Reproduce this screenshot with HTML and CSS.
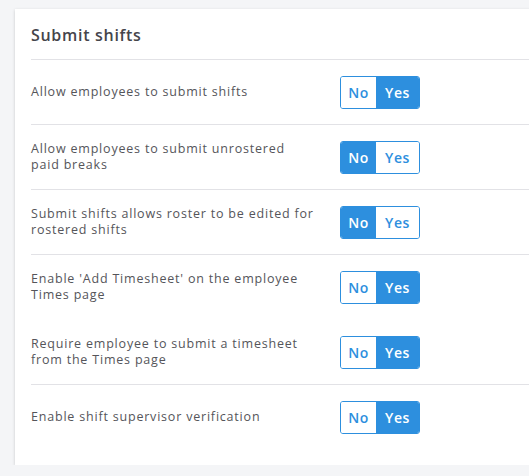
FILE: index.html
```html
<!DOCTYPE html>
<html>
<head>
<meta charset="utf-8">
<link rel="stylesheet" href="styles.css">
</head>
<body>
<div class="card">
  <div class="card-header"><h2 class="title">Submit shifts</h2></div>
  <div class="row">
    <div class="label">Allow employees to submit shifts</div>
    <div class="toggle"><span class="seg seg-no">No</span><span class="seg seg-yes on">Yes</span></div>
  </div>
  <div class="row">
    <div class="label">Allow employees to submit unrostered paid breaks</div>
    <div class="toggle"><span class="seg seg-no on">No</span><span class="seg seg-yes">Yes</span></div>
  </div>
  <div class="row">
    <div class="label">Submit shifts allows roster to be edited for rostered shifts</div>
    <div class="toggle"><span class="seg seg-no on">No</span><span class="seg seg-yes">Yes</span></div>
  </div>
  <div class="row no-border">
    <div class="label">Enable 'Add Timesheet' on the employee Times page</div>
    <div class="toggle"><span class="seg seg-no">No</span><span class="seg seg-yes on">Yes</span></div>
  </div>
  <div class="row">
    <div class="label">Require employee to submit a timesheet from the Times page</div>
    <div class="toggle"><span class="seg seg-no">No</span><span class="seg seg-yes on">Yes</span></div>
  </div>
  <div class="row no-border">
    <div class="label">Enable shift supervisor verification</div>
    <div class="toggle"><span class="seg seg-no">No</span><span class="seg seg-yes on">Yes</span></div>
  </div>
</div>
</body>
</html>
```
FILE: styles.css
```css
html, body {
  margin: 0;
  padding: 0;
  overflow: hidden;
}
body {
  background: #f4f5f7;
  padding: 9px 0 0 15px;
  font-family: "Open Sans", "Noto Sans", sans-serif;
  color: #55555a;
}
.card {
  width: 560px;
  background: #ffffff;
  box-shadow: 0 1px 3px rgba(0, 0, 0, 0.18);
  padding: 0 0 15px 16px;
  box-sizing: border-box;
}
.card-header {
  height: 51px;
  border-bottom: 1px solid #e2e2e6;
  display: flex;
  align-items: center;
  padding-top: 2px;
  box-sizing: border-box;
}
.title {
  margin: 0;
  font-size: 16px;
  font-weight: 600;
  letter-spacing: 0.7px;
  color: #45454b;
}
.row {
  height: 65px;
  box-sizing: border-box;
  border-bottom: 1px solid #e2e2e6;
  display: flex;
  align-items: center;
}
.row.no-border {
  border-bottom-color: transparent;
}
.label {
  width: 284px;
  margin-right: 25px;
  font-size: 12.5px;
  line-height: 16px;
  letter-spacing: 0.8px;
  color: #55555a;
}
.toggle {
  display: flex;
  height: 33px;
  box-sizing: border-box;
  border: 1px solid #2d8fde;
  border-radius: 3px;
  overflow: hidden;
}
.seg {
  display: flex;
  align-items: center;
  justify-content: center;
  font-size: 14px;
  font-weight: 600;
  letter-spacing: 0.6px;
  color: #2d8fde;
  background: #ffffff;
}
.seg-no { width: 35px; }
.seg-yes { width: 43px; }
.seg.on {
  background: #2d8fde;
  color: #ffffff;
}
```
